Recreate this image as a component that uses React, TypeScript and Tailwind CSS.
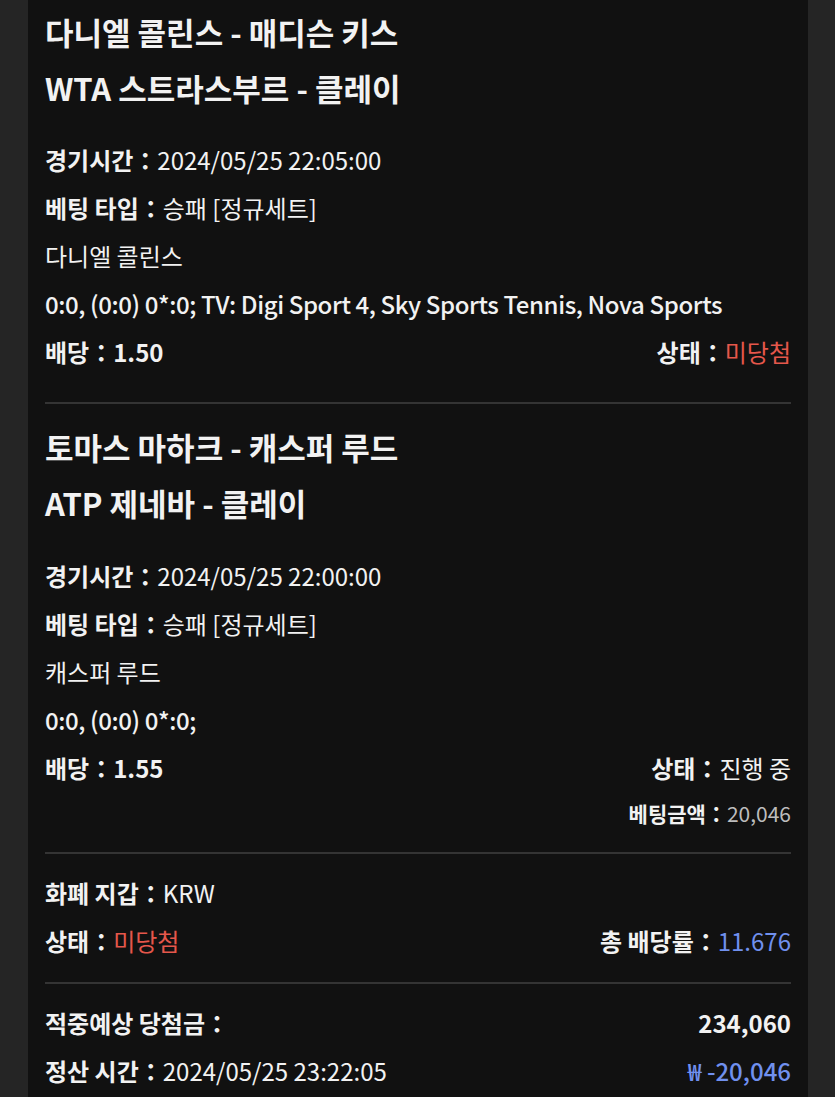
const font = { fontFamily: '"Noto Sans CJK KR", "Noto Sans", sans-serif' };

type Game = {
  home: string;
  league: string;
  time: string;
  pick: string;
  score: string;
  odds: string;
  status: string;
  lost: boolean;
};

const games: Game[] = [
  {
    home: "다니엘 콜린스 - 매디슨 키스",
    league: "WTA 스트라스부르 - 클레이",
    time: "2024/05/25 22:05:00",
    pick: "다니엘 콜린스",
    score: "0:0, (0:0) 0*:0; TV: Digi Sport 4, Sky Sports Tennis, Nova Sports",
    odds: "1.50",
    status: "미당첨",
    lost: true,
  },
  {
    home: "토마스 마하크 - 캐스퍼 루드",
    league: "ATP 제네바 - 클레이",
    time: "2024/05/25 22:00:00",
    pick: "캐스퍼 루드",
    score: "0:0, (0:0) 0*:0;",
    odds: "1.55",
    status: "진행 중",
    lost: false,
  },
];

const Divider = () => <div className="h-[2px] bg-[#343434]" />;

const Row = ({ children }: { children: React.ReactNode }) => (
  <div className="h-12 flex items-center justify-between whitespace-nowrap">{children}</div>
);

const Label = ({ children }: { children: React.ReactNode }) => (
  <span className="font-bold">{children}</span>
);

const GameBlock = ({ g, first, last }: { g: Game; first: boolean; last: boolean }) => (
  <div className={first ? "pt-1 pb-[26px]" : "pt-[15px] pb-4"}>
    <div className="text-[31px] font-bold leading-[56px]">{g.home}</div>
    <div className="text-[31px] font-bold leading-[56px]">{g.league}</div>
    <div className={first ? "mt-5" : "mt-[21px]"}>
      <Row>
        <div>
          <Label>경기시간：</Label>
          {g.time}
        </div>
      </Row>
      <Row>
        <div>
          <Label>베팅 타입：</Label>승패 [정규세트]
        </div>
      </Row>
      <Row>
        <div>{g.pick}</div>
      </Row>
      <Row>
        <div className="font-medium tracking-[-0.4px]">{g.score}</div>
      </Row>
      <Row>
        <div>
          <Label>배당：</Label>
          <span className="font-bold">{g.odds}</span>
        </div>
        <div>
          <Label>상태：</Label>
          <span className={g.lost ? "text-[#e5574b]" : ""}>{g.status}</span>
        </div>
      </Row>
      {last && (
        <div className="h-11 flex items-center justify-end text-[21px]">
          <Label>베팅금액：</Label>
          <span className="text-[#bdbdbd]">20,046</span>
        </div>
      )}
    </div>
  </div>
);

export default function App() {
  return (
    <div className="min-h-[1097px] bg-[#252525] pl-[28px] pr-[27px]" style={font}>
      <div className="bg-[#111111] px-[17px] text-[#f2f2f2] text-[24px] min-h-[1097px]">
        {games.map((g, i) => (
          <div key={i}>
            <GameBlock g={g} first={i === 0} last={i === games.length - 1} />
            <Divider />
          </div>
        ))}
        <div className="pt-[15px] pb-[17px]">
          <Row>
            <div>
              <Label>화폐 지갑：</Label>KRW
            </div>
          </Row>
          <Row>
            <div>
              <Label>상태：</Label>
              <span className="text-[#e5574b]">미당첨</span>
            </div>
            <div>
              <Label>총 배당률：</Label>
              <span className="text-[#7090ee]">11.676</span>
            </div>
          </Row>
        </div>
        <Divider />
        <div className="pt-[15px]">
          <Row>
            <Label>적중예상 당첨금：</Label>
            <span className="font-bold">234,060</span>
          </Row>
          <Row>
            <div>
              <Label>정산 시간：</Label>2024/05/25 23:22:05
            </div>
            <span className="text-[#7090ee] font-medium">₩ -20,046</span>
          </Row>
        </div>
      </div>
    </div>
  );
}
